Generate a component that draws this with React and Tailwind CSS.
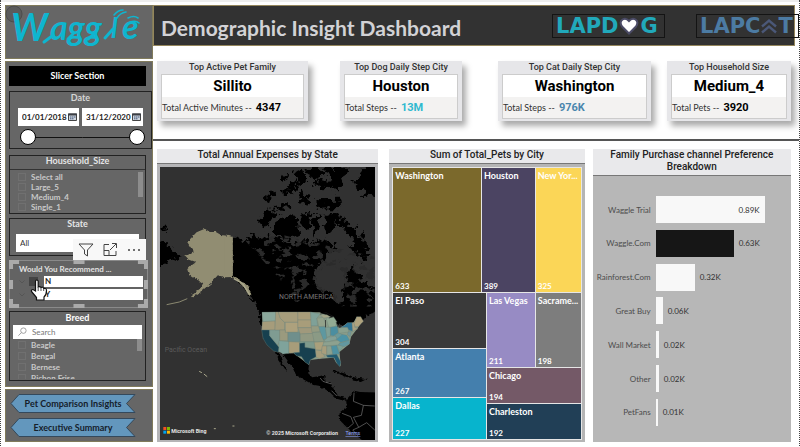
import React, { useState } from "react";

const segoe = "font-['Lato','Open_Sans',sans-serif]";
const din = "font-['Roboto',sans-serif]";

const cards = [
  { title: "Top Active Pet Family", value: "Sillito", label: "Total Active Minutes --", total: "4347", color: "text-black", pos: "mr-8" },
  { title: "Top Dog Daily Step City", value: "Houston", label: "Total Steps --", total: "13M", color: "text-[#2fb9cf]", pos: "mr-9" },
  { title: "Top Cat Daily Step City", value: "Washington", label: "Total Steps --", total: "976K", color: "text-[#4a86ad]", pos: "mr-4" },
  { title: "Top Household Size", value: "Medium_4", label: "Total Pets --", total: "3920", color: "text-black", pos: "" },
];

const channels = [
  { name: "Waggle Trial", text: "0.89K", width: 109, dark: false },
  { name: "Waggle.Com", text: "0.63K", width: 78, dark: true },
  { name: "Rainforest.Com", text: "0.32K", width: 39, dark: false },
  { name: "Great Buy", text: "0.06K", width: 7, dark: false },
  { name: "Wall Market", text: "0.02K", width: 3, dark: false },
  { name: "Other", text: "0.02K", width: 3, dark: false },
  { name: "PetFans", text: "0.01K", width: 2, dark: false },
];

const states = [
  ["#8aa79b", "337,67 378,66 378,93 340,95"],
  ["#a69c7b", "338,95 376,93 376,120 336,120"],
  ["#17404f", "336,120 360,120 360,137 388,172 386,187 372,183 352,165 340,145"],
  ["#7f9c92", "360,120 390,120 390,155 384,165 360,137"],
  ["#a39b7b", "378,66 386,66 392,85 405,97 405,120 376,120"],
  ["#a69d7c", "386,66 445,66 445,97 405,97 392,85"],
  ["#ada17d", "407,97 445,97 445,127 407,127"],
  ["#9a9a7e", "390,120 407,120 407,127 415,127 415,152 390,152"],
  ["#6f8f8c", "415,127 452,127 452,155 415,155"],
  ["#7fa39b", "388,152 418,155 418,190 400,192 388,184"],
  ["#a89d7a", "418,155 450,157 450,187 418,190"],
  ["#a89d7a", "445,66 483,66 485,90 445,90"],
  ["#a89d7a", "445,90 485,90 485,113 445,113"],
  ["#a0997c", "445,113 487,113 492,130 452,132"],
  ["#919982", "452,132 492,130 494,155 452,155"],
  ["#7e9a8c", "450,155 494,155 497,176 466,172 466,160 450,160"],
  ["#17404f", "450,160 466,158 466,172 498,177 500,200 482,210 478,224 466,216 456,200 440,197 432,188 450,187"],
  ["#7fa198", "483,66 512,72 502,85 504,108 485,108"],
  ["#949b82", "485,108 508,108 512,125 487,127"],
  ["#8b9a85", "488,128 514,126 524,155 494,155"],
  ["#aaa07c", "494,157 524,155 516,180 498,180"],
  ["#a59d7c", "498,180 516,182 526,200 510,206 500,202"],
  ["#93a28b", "502,85 522,82 530,108 508,110"],
  ["#a3a587", "512,74 532,74 545,82 522,84"],
  ["#5e98a0", "508,110 528,110 532,145 522,150 512,125"],
  ["#92aa93", "530,85 552,80 562,95 558,110 538,112"],
  ["#7fa096", "528,112 543,112 543,138 532,142"],
  ["#4b8ea0", "543,112 564,108 566,128 552,138 543,136"],
  ["#84a096", "524,152 535,142 558,138 566,148 530,156"],
  ["#8da18f", "522,157 575,150 568,165 520,168"],
  ["#a89e7c", "518,168 532,168 532,195 516,190"],
  ["#8c9f8d", "532,168 545,168 550,192 532,195"],
  ["#4f92a2", "545,168 562,166 570,192 550,194"],
  ["#215a70", "530,196 562,193 574,216 571,230 562,220 554,203 534,202"],
  ["#7aa197", "562,166 582,168 570,185"],
  ["#6298a0", "570,160 600,150 600,162 584,170 566,164"],
  ["#4d93a5", "560,148 572,132 592,136 600,150 574,157"],
  ["#6b9a9c", "556,136 568,128 578,134 564,146"],
  ["#8aa08e", "566,114 596,112 598,126 568,130"],
  ["#2f7494", "574,112 586,106 594,98 608,98 610,124 598,120 594,112"],
  ["#72979a", "596,126 606,124 602,140 594,134"],
  ["#a9a081", "608,98 616,96 616,112 626,116 610,124"],
  ["#b0a37e", "614,100 622,80 634,80 642,94 626,110 617,110"],
];

const islands = [
  "345,180 372,145 380,152 366,178 350,188", "395,112 414,100 418,116 402,126", "400,160 438,118 446,128 430,158",
  "366,205 395,185 420,190 430,205 400,206", "437,95 462,88 470,125 452,135", "470,84 505,84 525,105 500,120 478,112",
  "486,130 520,118 560,132 530,148", "500,178 570,176 572,204 508,206", "444,165 460,148 478,176 470,198 450,190",
  "520,83 560,83 600,83 578,118 560,158 536,110", "612,125 645,83 690,70 690,172 645,165",
  "335,212 366,208 374,232 346,268 332,250", "370,250 410,222 442,228 448,276 412,304 370,275",
  "455,222 482,218 478,268 460,262", "486,222 512,224 504,272 494,296", "525,228 556,222 560,264 530,284",
  "556,222 584,232 590,258 564,258", "575,246 612,258 650,310 665,350 640,346 602,290", "602,314 630,310 652,362 622,352",
  "552,320 562,310 564,326", "20,295 50,310 84,342 92,352 62,360 20,376", "32,262 50,264 50,272 32,272",
];

function ExpenseMap() {
  return (
    <svg viewBox="30 81 648 819" preserveAspectRatio="none" className="block h-[273px] w-full bg-[#313131]" role="img" aria-label="Map of total annual expenses by state">
      <defs>
        <filter id="coast" x="-5%" y="-5%" width="110%" height="110%" colorInterpolationFilters="sRGB">
          <feTurbulence type="fractalNoise" baseFrequency="0.055" numOctaves="3" seed="7" />
          <feDisplacementMap in="SourceGraphic" scale="42" xChannelSelector="R" yChannelSelector="G" />
        </filter>
        <filter id="edge" x="-5%" y="-5%" width="110%" height="110%" colorInterpolationFilters="sRGB">
          <feTurbulence type="fractalNoise" baseFrequency="0.09" numOctaves="2" seed="3" />
          <feDisplacementMap in="SourceGraphic" scale="11" xChannelSelector="R" yChannelSelector="G" />
        </filter>
        <filter id="lakes" x="0" y="0" width="100%" height="100%" colorInterpolationFilters="sRGB">
          <feTurbulence type="fractalNoise" baseFrequency="0.04 0.05" numOctaves="4" seed="11" />
          <feColorMatrix values="0 0 0 0 .17  0 0 0 0 .17  0 0 0 0 .17  12 0 0 0 -6.6" />
        </filter>
        <clipPath id="lakeArea">
          <path d="M285 300L400 285L500 310L676 350V500H560L500 440L440 490L400 430L330 350Z" />
        </clipPath>
      </defs>
      <g filter="url(#coast)">
        {islands.map((p) => <polygon key={p} points={p} />)}
        <path d="M248 292L275 300L310 284L340 296L380 292L420 310L470 302L500 310L535 295L548 330L522 360L502 385L494 415L510 440L545 455L560 490L582 488L580 455L592 430L585 390L610 385L640 420L662 440L700 450V530L660 520L640 545L600 560H337L325 510L300 465L270 425L248 412Z" />
      </g>
      <path d="M248 292V412L275 425L330 500L340 520H560L580 505L560 490L520 480L420 455L340 360L290 315Z" />
      <rect x="270" y="280" width="406" height="225" filter="url(#lakes)" clipPath="url(#lakeArea)" />
      <path d="M495 425L502 398L525 380L550 376L585 398L584 440L575 450L578 485L565 490L555 460L520 448Z" fill="#313131" filter="url(#edge)" />
      <path d="M600 570L690 505V560L640 545L620 580Z" fill="#313131" />
      <g filter="url(#edge)">
        <path d="M386 636L430 638L458 650L478 676L476 700L488 712L512 708L526 704L524 720L546 732L566 768L590 774L588 784L562 776L540 756L512 738L490 734L440 706L428 682L398 640Z" />
        <path d="M378 632L390 640L398 668L412 690L408 692L388 664Z" />
        <path d="M550 692L590 704L606 712L590 708Z M612 714L646 718L634 724L612 720Z" stroke="#000" strokeWidth="4" />
        <path d="M590 780L614 752L632 756L690 758V912H652L620 886L592 862L568 838L572 816L592 800Z" />
      </g>
      <g fill="none" stroke="#777" strokeWidth="2">
        <path d="M512 714L520 724L546 732M546 752L562 768M614 758L612 784L642 796L676 798M642 796L636 826L612 832M578 820L604 830L612 850L596 864M612 832L628 862L610 870L626 888M628 862L652 848L676 870" />
      </g>
      <path d="M248 292L238 288L214 285L198 276L180 276L165 266L140 277L126 292L112 306L122 322L132 334L106 347L116 358L138 366L124 376L112 388L118 406L134 416L152 424L160 430L150 446L120 470L128 472L162 448L182 430L204 406L225 412L248 411L266 426L284 444L298 468L306 462L292 436L268 418L248 408Z" fill="#918d72" filter="url(#edge)" />
      <path d="M224 290H249V408H224Z" fill="#918d72" />
      <path d="M50 494L88 486L112 476M174 440L186 432" fill="none" stroke="#8b8970" strokeWidth="3" />
      <path d="M252 416L278 430L300 464" fill="none" stroke="#aaa88c" strokeWidth="4" />
      <path d="M148 694L156 698M162 702L172 710M192 866H198M248 858H254" stroke="#aaa88c" strokeWidth="3" />
      <g transform="translate(0 450)">
        <path d="M337 67H510L545 82L562 100L570 116L594 98H612L622 80L640 92L625 114L605 140L600 162L570 186L574 228L560 218L552 203L512 206L482 210L478 224L430 188L388 187L340 145Z" fill="#8a9c88" />
        {states.map(([fill, pts]) => (
          <polygon key={pts} points={pts} fill={fill} stroke="#6d8278" strokeWidth="1" />
        ))}
        <path d="M512 72L530 68L552 80L538 84M528 90V112M560 96L566 112" fill="none" stroke="#1b1b1b" strokeWidth="2" />
      </g>
      <g className="font-['Roboto',sans-serif]">
        <text x="388" y="478" fontSize="21" fill="#777">NORTH AMERICA</text>
        <text x="44" y="637" fontSize="21" fill="#5b5b5b">Pacific Ocean</text>
        <text x="64" y="878" fontSize="16" fontWeight="700" fill="#e5e5e5">Microsoft Bing</text>
        <text x="350" y="886" fontSize="16" fontWeight="700" fill="#e5e5e5">© 2025 Microsoft Corporation</text>
        <text x="588" y="886" fontSize="16" fill="#91a8ff" textDecoration="underline">Terms</text>
      </g>
      <path d="M40 861h9v9h-9z" fill="#f25022" />
      <path d="M51 861h9v9h-9z" fill="#7fba00" />
      <path d="M40 872h9v9h-9z" fill="#00a4ef" />
      <path d="M51 872h9v9h-9z" fill="#ffb900" />
    </svg>
  );
}

function Tile({ name, value, className }) {
  return (
    <div className={`flex min-w-0 flex-col justify-between px-[2px] pt-[2px] text-white ${className}`}>
      <span className="text-[9px] leading-[11px] font-bold whitespace-nowrap">{name}</span>
      <span className="text-[8px] leading-[11px] font-bold">{value}</span>
    </div>
  );
}

function CheckRow({ label }) {
  return (
    <label className="flex h-full items-center gap-[5px] text-[8px] leading-[10px] font-bold text-[#c9c9c9]">
      <input type="checkbox" className="size-2 appearance-none border border-[#707070]" />
      {label}
    </label>
  );
}

function Calendar() {
  return (
    <svg viewBox="0 0 9 8" className="h-2 w-[9px] shrink-0" aria-hidden="true">
      <path d="M.5 1h8v6.5h-8z" fill="#cfd6de" stroke="#444" />
      <path d="M0 .5h9v2H0z" fill="#3b3f46" />
      <path d="M2 4h1.500M4 4h1.500M6 4h1.500M2 5.800h1.500M4 5.800h1.500" stroke="#344a70" strokeWidth=".9" />
    </svg>
  );
}

function DateBox({ label, value }) {
  const [v, setV] = useState(value);
  return (
    <div className="flex h-[18px] min-w-0 flex-1 items-center bg-white pr-[2px] pl-1">
      <input aria-label={label} value={v} onChange={(e) => setV(e.target.value)} className="w-full min-w-0 text-[8px] leading-[10px] font-bold text-[#222] outline-none" />
      <Calendar />
    </div>
  );
}

const rangeStyle =
  "h-4 w-1/2 min-w-0 cursor-pointer appearance-none bg-[linear-gradient(#111,#111)] bg-[length:100%_1px] bg-center bg-no-repeat [&::-webkit-slider-thumb]:size-4 [&::-webkit-slider-thumb]:appearance-none [&::-webkit-slider-thumb]:rounded-full [&::-webkit-slider-thumb]:border [&::-webkit-slider-thumb]:border-black [&::-webkit-slider-thumb]:bg-white";

function NavButton({ children }) {
  return (
    <button className="relative block h-[19px] w-[126px] text-[9px] leading-[19px] font-bold text-[#15202b]">
      <svg viewBox="0 0 126 19" className="absolute inset-0 h-full w-full" aria-hidden="true">
        <path d="M1 9.500L9 .5H125L116.500 9.500L125 18.500H9Z" fill="#6397bd" stroke="#34495c" />
      </svg>
      <span className="relative">{children}</span>
    </button>
  );
}

function Sidebar() {
  return (
    <aside className={`flex w-[148px] shrink-0 flex-col ${segoe}`}>
      <div className="relative h-[54px] border border-[#817b5b] bg-[#666]">
        <svg viewBox="0 0 146 52" className="block h-[52px] w-[146px] overflow-visible" role="img" aria-label="Waggle logo">
          <circle cx="8" cy="8" r="8" fill="#5b5b5b" stroke="#4d4d4d" />
          <g className="font-['Lato',sans-serif]" fontStyle="italic" fontWeight="700" fill="#0fb5cf">
            <text x="5" y="35" fontSize="38">W</text>
            <text x="44" y="34" fontSize="34">agg</text>
            <text x="105" y="32" fontSize="28">l</text>
            <text x="116" y="33" fontSize="34">e</text>
          </g>
          <path d="M38 36L46 30M62 33L67 28M82 33L88 28M99 32L107 23" fill="none" stroke="#0fb5cf" strokeWidth="3" strokeLinecap="round" />
          <path d="M108 9Q112 4 117 4M111 12Q114 7 120 6M122 12Q128 9 132 12M124 16Q130 14 133 17" fill="none" stroke="#0fb5cf" strokeWidth="1.600" strokeLinecap="round" />
        </svg>
      </div>
      <div className="mt-[2px] flex flex-col border border-[#817b5b] bg-[#666] pt-1 pb-[5px] pl-[3px]">
        <h2 className="mr-[6px] h-5 bg-black text-center text-[9px] leading-[19px] font-bold text-white">Slicer Section</h2>
        <section className="mt-[5px] h-[58px] border border-[#222] px-2">
          <h3 className="h-4 text-center text-[9px] leading-[12px] font-bold text-[#d5d5d5]">Date</h3>
          <div className="flex gap-[3px]">
            <DateBox label="Start date" value="01/01/2018" />
            <DateBox label="End date" value="31/12/2020" />
          </div>
          <div className="mt-[3px] -mr-[2px] ml-[2px] flex">
            <input type="range" aria-label="From" defaultValue="0" className={rangeStyle} />
            <input type="range" aria-label="To" defaultValue="100" className={rangeStyle} />
          </div>
        </section>
        <section className="mt-[6px] mr-[6px] h-[59px] border border-[#222]">
          <h3 className="h-[14px] border-b border-[#333] text-center text-[9px] leading-[10px] font-bold text-[#e5e5e5]">Household_Size</h3>
          <div className="mt-[2px] flex h-[41px] pr-[2px] pl-2">
            <div className="h-[41px] flex-1 overflow-hidden">
              {["Select all", "Large_5", "Medium_4", "Single_1"].map((l) => (
                <div key={l} className="h-[10px]"><CheckRow label={l} /></div>
              ))}
            </div>
            <div className="h-[25px] w-[5px] bg-[#8d8d8d]" />
          </div>
        </section>
        <section className="relative mt-1 mr-[6px] h-[38px] border border-[#222]">
          <h3 className="h-[15px] text-center text-[9px] leading-[10px] font-bold text-[#e5e5e5]">State</h3>
          <select aria-label="State" className="ml-[6px] block h-[18px] w-[123px] appearance-none bg-white pl-1 text-[8px] leading-[18px] text-[#333]">
            <option>All</option>
          </select>
          <div className="absolute top-5 right-[-1px] z-10 flex h-[21px] w-[73px] items-center justify-around bg-[#f8f8f8] text-[#444]">
            <button aria-label="Filters">
              <svg viewBox="0 0 16 14" className="block h-[14px] w-4" fill="none" stroke="currentColor"><path d="M1 1h14L9.500 7v6L6.500 11V7Z" /></svg>
            </button>
            <button aria-label="Focus mode">
              <svg viewBox="0 0 14 13" className="block h-[13px] w-[14px]" fill="none" stroke="currentColor"><path d="M6 1.500H1v11h12V8M1 7.500h5v5M9 .5h4.500V5M7 7l6-6" /></svg>
            </button>
            <button aria-label="More options">
              <svg viewBox="0 0 14 4" className="block h-1 w-[14px]" fill="currentColor"><circle cx="2" cy="2" r="1" /><circle cx="7" cy="2" r="1" /><circle cx="12" cy="2" r="1" /></svg>
            </button>
          </div>
        </section>
        <section className="relative mt-[4px] mr-[4px] h-[48px] border border-[#8a8a8a] bg-[#636363] px-1">
          <svg viewBox="0 0 138 48" preserveAspectRatio="none" className="absolute -top-px -left-px h-12 w-[calc(100%+2px)]" fill="none" stroke="#aaa" strokeWidth="4" aria-hidden="true">
            <path d="M2 9V2H10M64 2H75M128 2H136V9M2 39V46H10M64 46H75M128 46H136V39M2 20V29M136 20V29" />
          </svg>
          <h3 className="pt-[1px] pl-[5px] text-[8px] leading-[14px] font-bold text-[#e0e0e0]">Would You Recommend ...</h3>
          <div className="flex flex-col gap-[2px] text-[8px] font-bold">
            {["N", "Y"].map((l) => (
              <label key={l} className="flex h-[11px] items-center">
                <svg viewBox="0 0 6 4" className="ml-[5px] h-1 w-[6px]" fill="none" stroke="#555"><path d="M.5.5L3 3L5.500.5" /></svg>
                <input type="checkbox" className={`ml-1 size-[9px] appearance-none ${l === "N" ? "bg-[#444]" : ""}`} />
                <span className="ml-[6px] h-[11px] flex-1 bg-white pl-px leading-[11px] text-[#222]">{l}</span>
              </label>
            ))}
          </div>
          <svg viewBox="0 0 18 22" className="absolute top-[18px] left-[20px] h-[22px] w-[18px]" aria-hidden="true">
            <path d="M5.500 12V2.500Q5.500 1 6.800 1T8.200 2.500V8Q10 7 11 8.500Q13 7.600 13.700 9.400Q16.500 8.800 16.500 11.500Q16.500 16 14 18V21H6.500V18.500L1.500 12.500Q1 10.500 3 10.500Z" fill="#fff" stroke="#111" strokeWidth="1.200" />
            <path d="M8.200 8.500V12M11 9V12M13.700 9.500V12" stroke="#222" strokeWidth=".8" />
          </svg>
        </section>
        <section className="mt-[3px] mr-[6px] h-[70px] border border-[#222] px-[3px]">
          <h3 className="h-[13px] text-center text-[9px] leading-[11px] font-bold text-white">Breed</h3>
          <label className="flex h-[14px] items-center gap-1 bg-white pl-1">
            <svg viewBox="0 0 11 11" className="h-[10px] w-[11px]" fill="none" stroke="#999"><circle cx="6.500" cy="4" r="3" /><path d="M4.500 6L1 9.500" /></svg>
            <input aria-label="Search breed" placeholder="Search" className="w-20 text-[8px] leading-[12px] outline-none placeholder:text-[#777]" />
          </label>
          <div className="flex h-[40px] pl-[5px]">
            <div className="h-[40px] flex-1 overflow-hidden">
              {["Beagle", "Bengal", "Bernese", "Bichon Frise"].map((l) => (
                <div key={l} className="h-[11px]"><CheckRow label={l} /></div>
              ))}
            </div>
            <div className="h-3 w-[5px] bg-[#8d8d8d]" />
          </div>
        </section>
      </div>
      <nav className="mt-[2px] flex h-[53px] flex-col gap-[5px] border border-[#817b5b] bg-[#666] pt-1 pl-1">
        <NavButton>Pet Comparison Insights</NavButton>
        <NavButton>Executive Summary</NavButton>
      </nav>
    </aside>
  );
}

function Brand({ kind }) {
  const dog = kind === "dog";
  return (
    <div className={`flex h-6 items-center border border-[#141414] pl-[3px] font-['DejaVu_Sans',sans-serif] text-[21px] leading-6 font-bold ${dog ? "w-[113px] text-[#21a9bb]" : "w-[103px] text-[#4c7ba3]"}`}>
      <span>{dog ? "LAPD" : "LAPC"}</span>
      {dog ? (
        <svg viewBox="0 0 20 18" className="mx-[1px] h-[18px] w-5" role="img" aria-label="O">
          <path d="M10 16.500L3 9.500Q0 5 3.500 2.500Q7 .5 10 4Q13 .5 16.500 2.500Q20 5 17 9.500Z" fill="#fff" stroke="#4b4b66" strokeWidth="2" />
        </svg>
      ) : (
        <svg viewBox="0 0 18 16" className="h-4 w-[18px]" role="img" aria-label="A" fill="none" stroke="#4b5878" strokeWidth="2.400">
          <path d="M2 8.500L9 2.500L16 8.500M2 14.500L9 8.500L16 14.500" />
        </svg>
      )}
      <span>{dog ? "G" : "T"}</span>
    </div>
  );
}

function PanelTitle({ children }) {
  return <h2 className={`border-b border-[#777] bg-[#e9e9eb] px-4 pb-[2px] text-center text-[10px] leading-[12px] font-medium text-[#222] ${din}`}>{children}</h2>;
}

export default function App() {
  return (
    <div className="flex border-x border-dotted border-[#444] bg-white pt-[5px] pb-1 pl-1 shadow-[inset_0_2px_0_#eee]">
      <Sidebar />
      <main className="min-w-0 flex-1">
        <header className="mr-1 flex h-[41px] items-center border border-[#94865c] bg-[#323232] pl-[7px]">
          <h1 className={`flex-1 pt-1 text-[21px] leading-8 font-bold whitespace-nowrap text-[#d2d2d6] ${segoe}`}>Demographic Insight Dashboard</h1>
          <div className="mr-[-5px] flex gap-[31px]">
            <Brand kind="dog" />
            <Brand kind="cat" />
          </div>
        </header>
        <section className="mt-[15px] mr-2 ml-1 grid grid-cols-[183fr_158fr_169fr_124fr]">
          {cards.map((c) => (
            <article key={c.title} className={`h-[60px] bg-[#e6e6e9] px-1 pb-1 shadow-[4px_5px_6px_#aaa] ${c.pos} ${din}`}>
              <h2 className="h-[13px] text-center text-[9px] leading-[12px] font-medium whitespace-nowrap text-[#333]">{c.title}</h2>
              <div className="border border-[#ccc] bg-[#f3f2f1]">
                <div className="h-[22px] bg-white text-center text-[15px] leading-[23px] font-bold text-black">{c.value}</div>
                <p className={`flex h-[21px] items-center gap-1 text-[9px] whitespace-nowrap text-[#333] ${segoe}`}>
                  {c.label}
                  <b className={`text-[11px] leading-[19px] ${din} ${c.color}`}>{c.total}</b>
                </p>
              </div>
            </article>
          ))}
        </section>
        <hr className="mt-[18px] border-t-2 border-[#555]" />
        <section className="mt-2 mr-2 ml-1 grid grid-cols-[232fr_203fr_198fr]">
          <article className="mr-[11px] flex h-[293px] flex-col bg-[#b5b5b7]">
            <PanelTitle>Total Annual Expenses by State</PanelTitle>
            <div className="mt-[3px] px-[3px]"><ExpenseMap /></div>
          </article>
          <article className="mr-2 flex h-[293px] flex-col bg-[#b5b5b5]">
            <PanelTitle>Sum of Total_Pets by City</PanelTitle>
            <div className={`mx-[3px] mt-[3px] flex h-[273px] flex-col gap-px bg-[#e6e6e6] p-px ${segoe}`}>
              <div className="grid h-[124px] grid-cols-[88fr_53fr_45fr] gap-px">
                <Tile name="Washington" value="633" className="bg-[#7b692c]" />
                <Tile name="Houston" value="389" className="bg-[#4b4462]" />
                <Tile name="New Yor..." value="325" className="bg-[#fbd657]" />
              </div>
              <div className="grid min-h-0 flex-1 grid-cols-[93fr_94fr] gap-px">
                <div className="grid grid-rows-[55fr_49fr_41fr] gap-px">
                  <Tile name="El Paso" value="304" className="bg-[#3a3a3a]" />
                  <Tile name="Atlanta" value="267" className="bg-[#447fad]" />
                  <Tile name="Dallas" value="227" className="bg-[#07b4cd]" />
                </div>
                <div className="grid min-w-0 grid-rows-[75fr_35fr_35fr] gap-px">
                  <div className="grid min-w-0 grid-cols-[48fr_45fr] gap-px">
                    <Tile name="Las Vegas" value="211" className="bg-[#978bc4]" />
                    <Tile name="Sacrame..." value="198" className="bg-[#7d7d7d]" />
                  </div>
                  <Tile name="Chicago" value="194" className="bg-[#745967]" />
                  <Tile name="Charleston" value="192" className="bg-[#213f56]" />
                </div>
              </div>
            </div>
          </article>
          <article className="flex h-[293px] flex-col bg-[#b7b7b7]">
            <PanelTitle>Family Purchase channel Preference Breakdown</PanelTitle>
            <div className={`mt-5 mb-4 flex flex-1 flex-col justify-between text-[8px] text-[#333] ${segoe}`}>
              {channels.map((c) => (
                <div key={c.name} className="flex h-[27px] items-center">
                  <span className="w-[58px] text-right whitespace-nowrap text-[#4c4c4c]">{c.name}</span>
                  <div className={`ml-[5px] flex h-full items-center justify-end ${c.dark ? "bg-[#161616]" : "bg-[#f8f8f8]"} ${c.width > 100 ? "pr-[5px]" : ""}`} style={{ width: c.width }}>
                    {c.width > 100 && <span>{c.text}</span>}
                  </div>
                  {c.width <= 100 && <span className="ml-[5px]">{c.text}</span>}
                </div>
              ))}
            </div>
          </article>
        </section>
      </main>
    </div>
  );
}
